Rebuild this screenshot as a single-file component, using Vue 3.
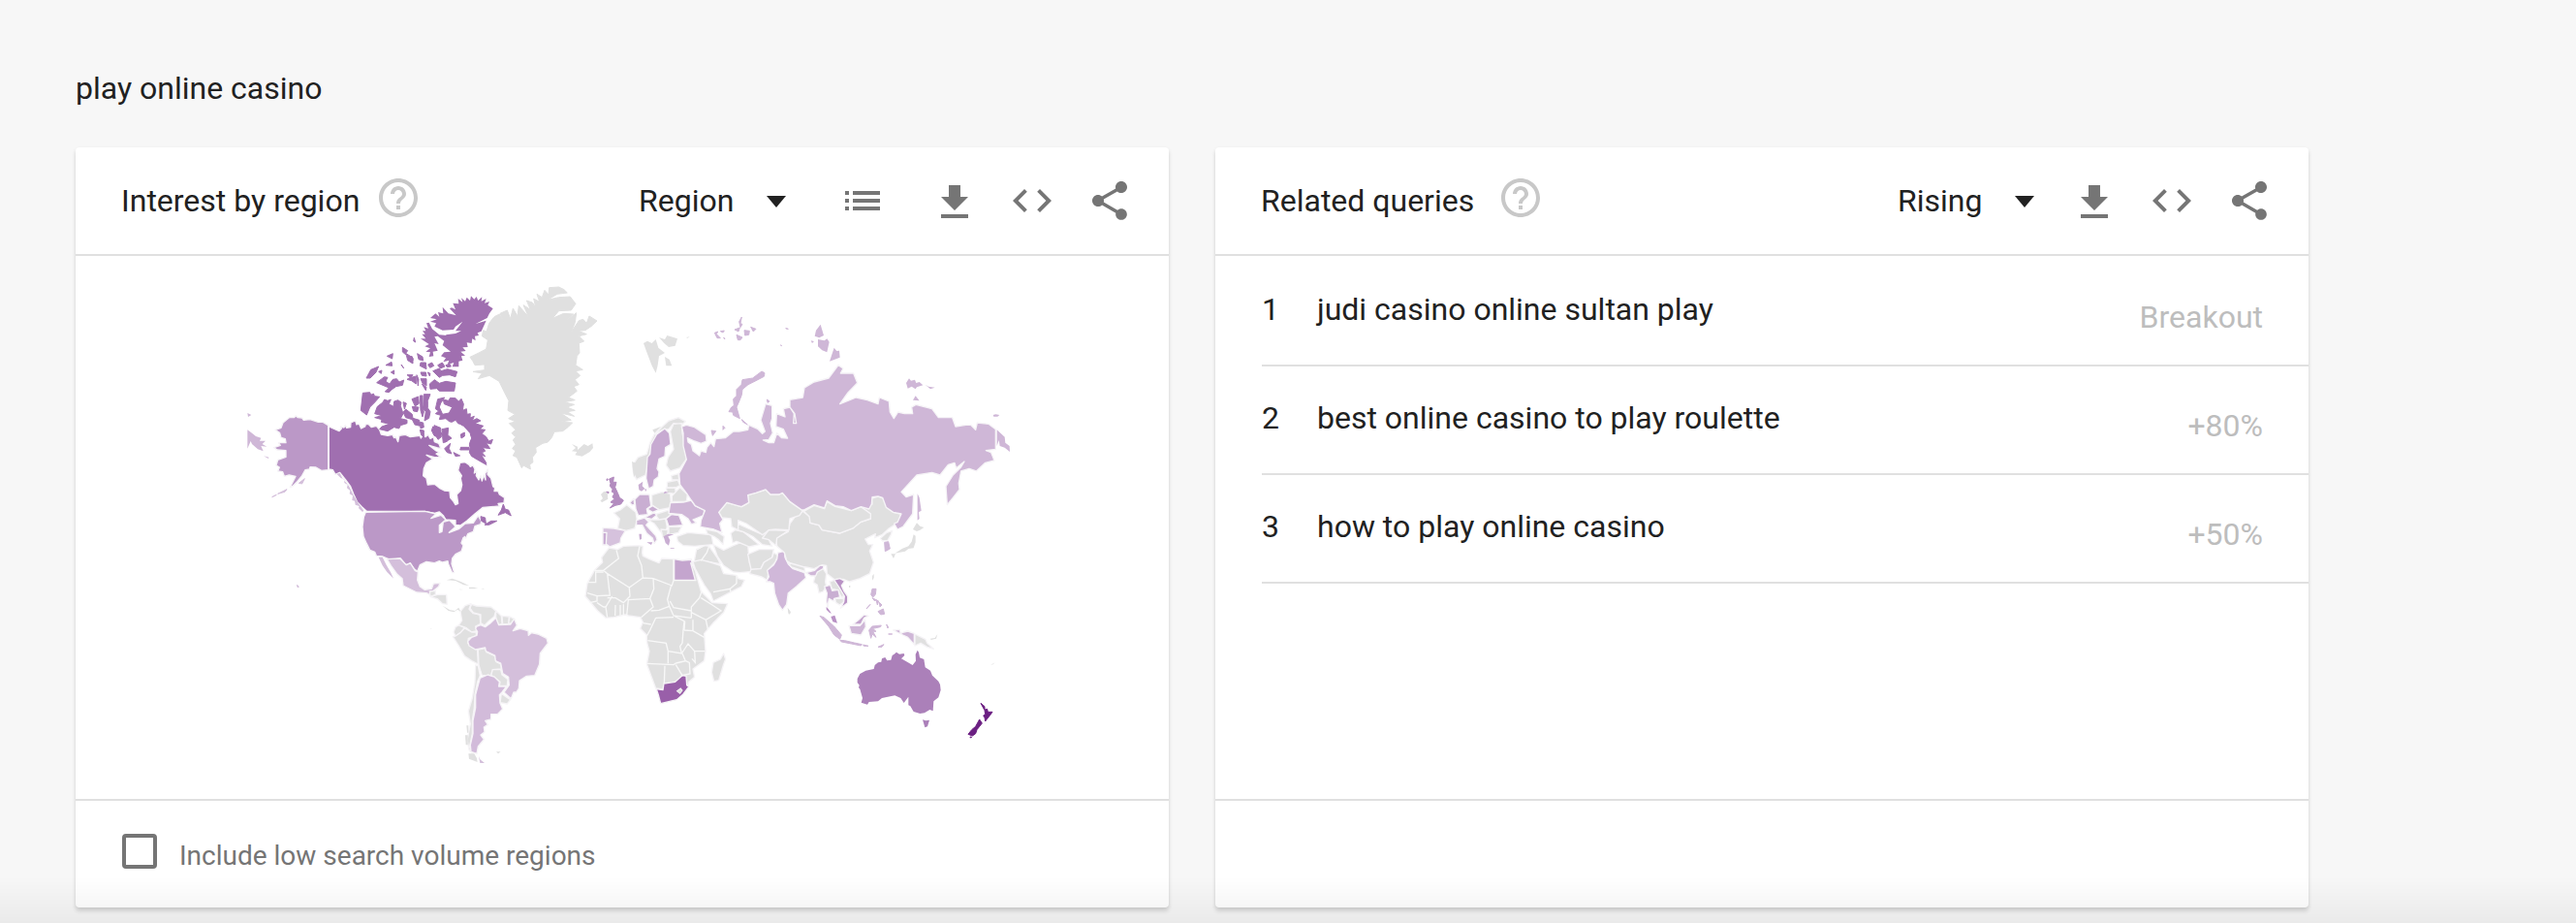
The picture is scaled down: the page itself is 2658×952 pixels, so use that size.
<script setup>
import { ref } from 'vue'

const resolution = ref('Region')
const ranking = ref('Rising')
const includeLowVolume = ref(false)

const queries = [
  { text: 'judi casino online sultan play', value: 'Breakout' },
  { text: 'best online casino to play roulette', value: '+80%' },
  { text: 'how to play online casino', value: '+50%' },
]

const icons = {
  list: 'M3 13h2v-2H3zm0 4h2v-2H3zm0-8h2V7H3zm4 4h14v-2H7zm0 4h14v-2H7zM7 7v2h14V7z',
  download: 'M19 10h-4V4H9v6H5l7 7zM5 19v2h14v-2z',
  code: 'M9.4 16.6L4.8 12l4.6-4.6L8 6l-6 6 6 6zm5.2 0l4.6-4.6-4.6-4.6L16 6l6 6-6 6z',
  share: 'M18 16.08c-.76 0-1.44.3-1.96.77L8.91 12.7c.05-.23.09-.46.09-.7s-.04-.47-.09-.7l7.05-4.11c.54.5 1.25.81 2.04.81 1.66 0 3-1.34 3-3s-1.34-3-3-3-3 1.34-3 3c0 .24.04.47.09.7L8.04 9.81C7.5 9.31 6.79 9 6 9c-1.66 0-3 1.34-3 3s1.34 3 3 3c.79 0 1.5-.31 2.04-.81l7.12 4.16c-.05.21-.08.43-.08.65 0 1.61 1.31 2.92 2.92 2.92s2.92-1.31 2.92-2.92-1.31-2.92-2.92-2.92z',
  help: 'M11 18h2v-2h-2zm1-16C6.48 2 2 6.48 2 12s4.48 10 10 10 10-4.48 10-10S17.52 2 12 2zm0 18c-4.41 0-8-3.59-8-8s3.59-8 8-8 8 3.59 8 8-3.59 8-8 8zm0-14c-2.21 0-4 1.79-4 4h2c0-1.1.9-2 2-2s2 .9 2 2c0 2-3 1.75-3 5h2c0-2.25 3-2.5 3-5 0-2.21-1.79-4-4-4z',
}
const regionActions = [
  { name: 'Download', icon: 'download' },
  { name: 'Embed', icon: 'code' },
  { name: 'Share', icon: 'share' },
]

const none = '#e0e0e0'
const ru = '#cfb7d7'
const ca = '#a06fb0'
const light = '#d4bfdb'

// Each area has its own origin on the map; three drawing units make one map unit.
const areas = [
  {
    name: 'North America', x: 240, y: 280,
    shapes: [
      { fill: ca, d: 'M298 480L330 494 337 486 334 480 345 483 349 476 353 484 365 482 366 468 380 462 384 474 391 471 398 486 410 480 412 473 420 472 430 482 445 478 455 490 460 504 480 508 495 505 500 515 505 512 512 527 516 508 535 505 550 512 580 508 583 516 590 505 597 512 605 505 612 517 622 512 625 527 638 532 645 548 632 545 608 538 630 555 640 560 630 564 645 575 625 575 600 568 620 580 600 592 592 610 590 632 600 640 604 660 625 658 640 670 655 678 672 680 674 700 684 712 690 722 698 718 694 690 706 678 710 660 706 640 709 632 698 615 704 592 720 590 732 598 736 604 744 600 750 612 748 624 756 618 754 632 762 645 768 632 772 648 778 630 783 645 782 625 790 612 789 628 800 640 806 665 812 670 810 680 822 680 826 690 842 700 840 716 822 718 826 726 800 728 775 730 750 750 725 772 705 786 690 784 690 770 660 768 652 755 640 744 625 748 595 742 415 742 400 728 385 712 375 690 365 665 350 645 332 622 318 628 310 614 298 612Z' },
      { fill: '#bb98c7', d: 'M132 490L150 484 156 468 175 452 190 452 196 446 202 452 215 453 220 460 240 458 265 466 280 466 296 476V614L275 616 258 606 240 605 238 612 225 614 215 632 200 650 185 665 178 668 195 634 175 630 160 634 155 620 140 618 145 606 135 600 140 583 165 574 165 554 138 552 128 545 148 538 142 530 165 530 163 518 150 514 146 500Z' },
      { fill: '#bb98c7', d: 'M412 745L595 742 630 750 614 764 645 754 660 768 640 785 640 808 648 805 652 775 672 770 684 782 690 790 670 808 700 797 720 780 745 778 760 756 770 772 768 782 750 788 745 805 728 812 722 826 718 820 712 832 714 824 708 840 714 848 708 866 690 875 680 888 678 905 686 932 680 932 668 905 666 896 650 900 640 896 625 902 600 898 580 908 572 928 562 920 550 904 536 908 520 888 488 892 465 882 445 880 440 868 425 862 415 842 405 820 402 790 406 760Z' },
    ],
    details: [
      { fill: ca, edge: true, d: 'M403 376L425 374 428 382 436 378 440 386 455 388 440 405 425 420 415 444 397 430ZM440 440L448 418 465 405 470 396 480 400 490 396 484 410 498 418 500 402 512 398 522 405 520 416 528 440 520 455 540 460 540 470 520 476 515 486 500 482 480 494 455 488 462 480 485 472 460 466 462 458 440 452 462 446ZM635 395L656 390 644 408 640 420 650 442 670 438 680 420 655 410 652 396 668 400 674 391 690 392 700 402 708 394 715 410 712 430 724 425 726 442 736 440 735 453 748 448 742 462 756 455 768 462 750 470 776 478 765 488 782 490 772 502 785 512 793 525 805 520 800 534 785 530 797 548 775 545 782 556 772 560 782 572 770 568 785 592 785 602 765 590 740 572 733 560 735 545 732 532 740 516 736 504 730 495 715 478 700 472 690 460 675 468 660 455 640 458 644 445 628 440 638 432 628 425Z' },
      { fill: ca, d: 'M582 208L598 208 586 194 596 194 588 184 598 184 592 172 606 176 600 160 608 158 618 178 640 196 665 198 684 218 660 196 690 192 708 184 690 184 712 155 690 170 684 180 650 182 625 170 630 160 612 155 632 148 612 144 628 130 640 140 636 126 652 130 650 110 668 130 692 136 672 115 678 112 690 118 682 98 700 100 698 84 712 95 708 82 720 92 725 80 735 90 738 76 748 86 755 78 760 90 772 79 770 92 785 84 780 98 795 93 790 104 806 115 795 130 788 144 752 162 785 152 770 185 758 190 762 198 750 200 752 214 742 208 740 222 725 220 728 234 712 235 722 246 706 248 720 260 708 262 712 275 700 278 700 295 680 295 685 282 665 288 670 275 652 280 660 268 645 262 655 250 675 248 650 228 655 215 635 200 625 202 638 225 625 222 635 245 620 248 622 262 608 264 612 250 598 248 612 238 595 232 608 225Z' },
      { fill: ca, edge: true, d: 'M610 348L625 335 640 346 660 340 690 345 686 370 640 370 632 362 612 364ZM620 308L640 300 645 308 665 302 695 310 690 326 672 320 650 322 640 328ZM635 290l14-8 8 12-14 6zM582 312l16 0 2 12-14-2zM582 332l18 0 0 22-12-8zM586 348l14 10-2 10zM526 235l16 10-6 8 22 14 0 18-16-10-4-16-12-10zM572 254l16 10 2 12-14-4zM582 282l16 0 2 20-20-10zM478 262l18-8-2 16zM474 290l18-10 2 12zM414 330l14-26 24-10-8 18-18 18zM446 344l24-18 10 2-6 12 12 8 10-14 12-2 8 10 14-6-4 16-20 4-14 10-8 8-12-2 12-12zM540 320l18 0-6 8 16-4 0 24-14-10-14-4 10-6zM562 205l-2 10 6 4zM522 288l8 12zM528 404l10 4-6 18zM555 395l20-8 2 22-12 8zM556 418l20 2-4 14-12-2zM528 436l8-10 20 16 2 12 20 6 2 18-16-4-8-16-20-6zM580 384h8v30l4 20-4 16-6-20zM592 380h20l-8 20 0 22 8 12-4 20-14 8 4-28-8-10zM580 466l10 2 2 14-10 4zM580 490l12 2 0 20-8-6zM620 480l16 10-2 22-10-4-8-16zM642 490l14-6 14 20-8 8 12 10-22 8-2-18zM708 500l12-4 0 14-10 4zM708 544h24v8h-28zM768 758l14 4 2 18-14-8zM780 784l20-12 18 0-24 12zM838 720l6 16 10 2 8 18-18-10-22 8 10-16zM452 310l10-4-2 10zM490 312l10-6 0 12zM570 320l6 14-2 20zM604 312l8 4-2 8zM605 288l12-6 6 10-12 6zM545 268l10-6 4 12zM660 290l12-4 4 8-12 2z' },
      { fill: light, d: 'M322 626l10-2 8 16 20 24 14 28 16 26 16 22-4 4-12-12 2-6-12-4-2-12-8-2 2-14-10-6 2-10-10-8 2-10-10-6 0-10-12-6z' },
      { fill: ru, d: 'M46 490L60 500 72 510 88 515 84 524 102 524 92 534 106 542 88 540 95 556 78 550 60 534 56 525 46 548ZM46 438l12 6-10 6zM96 571l16 4-1 4z' },
      { fill: light, edge: true, d: 'M205 655l18-14-8 16zM144 686l24-12-6 8-22 6zM122 698l14-7zM200 970l5 6-4 1z' },
      { fill: '#ffffff', d: 'M628 464L670 466 705 474 720 486 734 500 736 520 728 545 702 545 690 560 660 568 640 560 655 548 670 540 662 520 650 500 636 490ZM700 572L740 574 786 600 788 612 752 594 700 588Z' },
      { fill: ca, edge: true, d: 'M624 476l20 8 2 28-10 8-12-20zM648 488l20-4-2 22 12 10-20 12-6-18zM706 504l12-6 0 12-10 6zM706 544h22v6h-22zM656 548l18-16-4 16 8 16-14-4zM684 560l20 10-14 2z' },
    ],
  },
  {
    name: 'Greenland', x: 460, y: 280,
    shapes: [],
    details: [
      { fill: none, edge: true, d: 'M75 265L102 252 125 240 130 212 112 200 116 182 126 186 134 160 150 140 166 132 180 158 168 130 190 120 200 146 208 114 222 138 226 106 256 140 240 104 262 118 250 90 268 96 278 110 272 84 290 94 282 70 298 80 306 58 318 72 320 50 350 48 366 56 376 66 345 70 315 88 350 80 385 78 402 100 388 120 350 122 330 145 365 130 395 132 372 154 404 128 400 158 388 188 412 152 425 148 436 160 444 138 468 153 450 170 432 182 410 184 436 194 412 200 428 216 412 222 414 252 406 262 402 290 424 304 402 308 416 322 400 335 412 350 396 356 406 370 380 390 400 398 366 404 398 412 375 420 400 430 376 434 398 448 356 438 388 460 352 466 392 468 378 482 362 494 336 496 328 514 316 528 300 532 278 545 280 560 268 575 270 590 260 598 262 612 240 600 235 608 220 575 208 570 216 555 206 548 216 535 208 522 216 512 204 500 216 490 196 470 216 465 194 455 214 442 192 430 195 400 182 375 165 340 135 322 100 332 112 315 84 310 120 305 120 288 90 290 84 278Z' },
      { fill: none, d: 'M390 534l18 8 0 10 20-18 12 6 14-8 2 14-10 12-24 14-22-4 6-10-16-2 12-10z' },
    ],
  },
  {
    name: 'Latin America', x: 360, y: 530,
    shapes: [
      { fill: light, d: 'M118 140L158 138 178 158 190 152 205 176 214 180 212 205 220 225 235 235 256 232 262 216 282 214 278 225 262 238 250 250 240 245 210 243 168 222 165 200 148 185 130 160Z' },
      { fill: none, d: 'M250 240L268 238 268 250 252 256ZM252 256L275 250 302 250 304 280 290 278 275 264Z' },
      { fill: none, d: 'M345 302L360 284 378 278 372 295 385 308 405 312 408 340 392 348 396 362 380 366 362 352 340 345 350 330Z' },
      { fill: none, d: 'M380 280L395 285 440 288 455 300 450 318 435 330 420 345 408 338 408 312 385 306 375 292Z' },
      { fill: none, d: 'M455 300L472 316 474 340 464 344 455 325ZM474 316L496 318 494 340 476 342ZM498 318L512 325 504 340 494 338Z' },
      { fill: none, d: 'M330 350L340 345 358 352 345 368 330 378 324 366Z' },
      { fill: none, d: 'M322 380L330 378 345 368 358 354 380 366 394 366 394 378 370 385 368 400 380 412 398 420 400 465 380 455 358 440 340 408Z' },
      { fill: none, d: 'M400 420L422 416 426 428 452 440 456 458 470 465 472 480 445 482 440 500 412 500 402 468Z' },
      { fill: none, d: 'M445 482L470 482 474 498 492 512 490 532 466 532 468 520 440 500Z' },
      { fill: none, d: 'M392 468L400 470 406 500 398 520 390 560 388 600 382 640 382 680 374 720 382 740 372 730 366 700 376 650 370 610 382 570 390 520Z' },
      { fill: none, d: 'M472 556L500 575 490 588 468 584Z' },
      { fill: '#d2bbda', d: 'M406 508L430 498 450 504 466 520 464 534 488 534 474 552 466 560 468 586 476 604 460 620 440 620 440 636 422 640 430 652 418 660 420 675 408 684 418 698 400 720 396 742 378 736 376 715 384 680 384 640 392 600 392 560 400 530Z' },
      { fill: light, d: 'M396 348L408 344 422 350 438 338 455 322 464 344 500 342 512 325 520 345 508 362 530 355 555 362 556 376 565 368 585 372 612 385 616 400 592 432 590 465 575 500 550 502 528 516 526 540 518 552 510 552 502 572 480 552 496 530 494 505 476 494 470 462 454 455 452 438 424 425 422 414 392 420 372 408 368 395 380 382 396 376 398 365 392 355Z' },
    ],
    details: [
      { fill: light, d: 'M92 134L104 134 116 158 130 182 138 200 118 180 104 160ZM402 750l4 10 14 11-14 0z' },
      { fill: none, d: 'M290 284L312 297 328 300 340 290 346 302 336 296 325 304 308 300ZM302 205L320 200 345 209 372 222 355 220 330 207ZM372 227h14l14 4-28 1zM342 233l14 1-12 1zM408 232h10v2zM370 742l18 0 8 14 2 12-26-10zM456 736l14 0-8 6zM253 353l4 2-3 1zM364 655h6v22h-4zM360 685h8v30h-6z' },
    ],
  },
  {
    name: 'Africa and Middle East', x: 580, y: 520,
    shapes: [
      { fill: none, d: 'M145 135L172 140 190 130 235 128 250 130 248 150 250 160 270 170 300 182 308 168 345 170 372 174 400 170 404 190 412 205 430 270 440 280 465 305 512 308 500 335 470 365 440 400 444 455 440 485 405 510 410 535 392 550 388 568 370 560 308 572 290 570 262 495 270 455 262 425 262 405 242 385 250 365 242 350 205 345 195 342 160 350 135 352 110 330 85 300 72 285 78 245 100 205 125 180 122 165Z' },
      { fill: none, d: 'M412 160L416 140 440 128 455 130 480 165 490 185 460 180 430 175 408 180Z' },
      { fill: none, d: 'M405 178L430 172 460 180 490 190 500 215 540 220 545 230 565 235 555 255 522 272 468 300 460 278 440 250 412 200Z' },
      { fill: none, d: 'M468 125L478 130 500 142 530 128 550 120 575 125 580 180 590 208 550 212 530 210 500 190 480 160Z' },
      { fill: none, d: 'M575 155L610 140 655 140 650 165 625 180 615 200 585 202 580 180Z' },
      { fill: none, d: 'M585 202L615 200 625 180 650 165 655 150 668 158 660 180 640 200 635 235 618 225 580 215Z' },
      { fill: none, d: 'M522 90L535 80 560 85 610 125 580 132 570 128 540 115 528 120Z' },
      { fill: none, d: 'M543 60L575 75 610 90 640 80 650 95 640 110 650 130 620 125 590 100 560 85 543 80Z' },
      { fill: '#c4a5ce', d: 'M347 170L372 174 400 172 404 190 398 182 412 235H347Z' },
      { fill: '#995fa9', d: 'M292 572L312 575 315 555 350 550 372 530 384 532 386 560 392 565 375 588 355 605 305 617 298 590Z' },
      { fill: '#d0b8d9', d: 'M665 170L668 150 688 145 690 165 700 185 715 200 750 212 755 228 725 255 700 275 695 310 682 328 670 310 658 275 655 245 645 240 632 240 640 225 635 205 655 188Z' },
      { fill: none, d: 'M500 462L506 480 500 495 485 545 470 548 463 520 468 490 490 480Z' },
    ],
    borders: 'M100 205H128L175 168 168 142M78 242H104V210H128M128 205L140 215 148 282 108 284 78 275M140 215L208 258 250 228 246 190 234 160 240 130M250 228L282 230 340 252 345 236V170M345 236H415M208 258L210 285 190 305 165 290 140 290M282 230L284 262 272 292 205 296 200 345M272 292L282 318 262 335 245 350M275 330L300 328 332 316 345 345 400 352M332 316L326 295 338 250M345 345L378 362 375 390 372 430 365 440 370 462 328 455 322 430 265 422M290 352L345 350M290 352L272 390 262 408M262 493L345 497 352 492M328 455V493M370 462L390 432 410 455 442 455M352 492L382 485 372 462M318 500L316 555M352 497L372 530 396 525 394 490 382 485M400 352L400 318 425 290 432 270M400 330L345 320 334 300M400 335L445 358 492 330 465 312 430 290M445 358L452 390M378 390L405 392 440 412M405 358L405 390M380 362L378 390M190 310V345M180 312V345M165 312L164 345M135 318L140 350M108 305L128 318 135 318 155 285M85 305L108 300 108 284M250 368L275 372M410 455L412 490 402 478M430 175L448 150 455 130M440 128L418 140M468 272L520 262 522 272M520 262L540 245 540 222',
    details: [
      { fill: '#f4f4f4', d: 'M353 578l14-10 7 8-9 12z' },
      { fill: none, d: 'M357 579l9-7 5 5-7 7zM698 320l10 14-7 5z' },
    ],
  },
  {
    name: 'East Asia and Oceania', x: 800, y: 520,
    shapes: [
      { fill: none, d: 'M300 0L298 -18 318 -24 332 -20 345 8 365 25 388 30 384 52 368 65 352 75 330 95 308 104 310 92 278 108 288 125 302 125 292 145 304 180 292 215 262 230 230 240 210 232 185 235 160 215 158 190 145 188 120 200 95 195 60 192 35 175 28 150 5 130 2 105 40 85 45 60 60 40 85 22 108 40 108 58 135 65 145 80 200 90 240 75 265 55 295 45 295 30 270 12Z' },
      { fill: none, d: 'M38 180L90 195 92 208 50 195Z' },
      { fill: none, d: 'M125 215L145 195 158 215 155 240 158 255 148 270 135 275 130 250 118 242Z' },
      { fill: none, d: 'M168 240L182 235 196 250 212 280 208 292 190 265 175 262Z' },
      { fill: none, d: 'M185 292h26v12l-12 8-12-8z' },
      { fill: '#c9aed2', d: 'M152 255L170 250 176 268 195 265 200 288 182 292 180 300 166 292 162 320 158 300 160 275Z' },
      { fill: '#b992c5', d: 'M182 234L200 230 215 238 205 252 212 268 224 285 224 305 202 322 212 302 214 285 196 255Z' },
      { fill: ru, d: 'M95 212L122 205 138 190 150 190 148 200 130 210 125 222 110 222ZM228 376L262 376 278 358 280 380 265 405 235 400Z' },
      { fill: '#c4a5ce', d: 'M240 372L258 358 275 342 288 346 275 352 265 372Z' },
      { fill: ru, d: 'M365 390L385 388 388 400 398 396 410 393 430 400V434L410 412 395 405Z' },
      { fill: none, d: 'M432 402L465 418 470 430 490 448 470 442 450 430 432 438Z' },
      { fill: none, d: 'M325 106L345 88 362 82 358 94 348 112 332 114Z' },
    ],
    details: [
      { fill: '#ab80b9', d: 'M254 540L262 525 280 515 305 510 308 498 318 490 328 488 330 478 340 474 346 484 358 482 362 468 368 464 375 458 384 464 398 462 400 468 390 478 425 498 435 485 434 465 440 452 444 458 447 475 460 480 464 505 480 515 486 530 505 548 510 558 512 575 505 598 490 610 488 640 478 636 462 646 448 648 428 642 418 625 412 622 412 596 398 615 388 600 370 592 330 600 318 610 290 612 285 620 266 614 270 600 262 572 258 568 260 560 254 552ZM456 667l10 3 11-2-6 20-8 3z' },
      { fill: '#6b1f82', edge: true, d: 'M636 616L648 626 648 636 656 634 658 643 672 643 664 654 656 664 650 672 648 660 644 654 650 650 648 638ZM632 666L640 678 632 688 624 698 620 710 610 717 597 712 608 698 620 688ZM603 720l5 1-4 2z' },
      { fill: ru, edge: true, d: 'M338 118l12-2 5 22-15 8zM138 346L150 350 182 378 205 405 200 418 182 405 165 378ZM200 421L215 422 245 429 268 434 265 438 235 432 205 426ZM290 390L300 378 328 375 325 380 302 385 312 394 302 394 312 412 300 402 296 415ZM272 435l16 4-14 0zM318 442l18-8-6 8zM300 262h12l-2 18-8 8-6-8zM318 332l16-8 4 16-12 2zM312 296l8 4-4 12zM322 304l8 8-6 6zM282 324l12-14zM344 372l6 8-2 4zM350 402h12zM300 290l12 6-4 4z' },
      { fill: '#b992c5', d: 'M172 348L184 344 192 368 178 364ZM158 318l6 6 10 14-6-2-10-10z' },
      { fill: none, d: 'M438 58L448 68 460 72 448 80 438 84 426 78ZM428 94L434 98 434 118 428 136 412 138 402 146 370 152 392 138 412 130 422 116ZM358 154l14 0-6 14zM300 222l5-6 0 12-5 8zM480 416l14-2 8-12-4 14-16 4zM228 252h4v6h-4zM38 322l10 14-6 6zM515 418l10 6zM548 435l10 4zM595 478l5 5zM666 498l14-8-6 6zM588 518l5 6z' },
    ],
  },
  {
    name: 'Europe and North Asia', x: 580, y: 280,
    shapes: [
      { fill: none, d: 'M218 600L235 575 262 565 272 530 285 505 310 480 330 462 360 452 382 464 370 475 345 470 330 488 312 490 292 500 285 530 272 560 265 600 258 630 230 644 220 620Z' },
      { fill: none, d: 'M335 495L345 472 370 470 372 500 380 540 385 580 365 608 335 618 322 600 328 575 345 550Z' },
      { fill: none, d: 'M338 632L360 626 362 645 340 645ZM325 652L358 645 365 662 350 670 325 668ZM322 670L350 668 352 688 325 685Z' },
      { fill: none, d: 'M160 747L180 738 200 722 228 745 232 770 225 795 198 802 172 795 178 765Z' },
      { fill: none, d: 'M278 692L310 682 335 688 338 730 300 738 278 722Z' },
      { fill: none, d: 'M340 695L365 668 388 690 385 712 340 712Z' },
      { fill: none, d: 'M288 752L330 738 335 755 320 765 300 768ZM266 768L300 768 320 765 325 790 318 818 300 800 285 780Z' },
      { fill: none, d: 'M330 790L370 790 360 808 330 815ZM306 798L328 800 325 820 312 825Z' },
      { fill: none, d: 'M355 820L390 808 430 812 462 815 468 845 410 850 375 848 358 835Z' },
      { fill: none, d: 'M445 798L480 805 502 820 498 845 484 830 470 820 450 812Z' },
      { fill: none, d: 'M485 745L510 715 555 728 578 715 575 692 630 675 645 690 672 690 682 685 705 712 745 740 735 755 705 765 702 800 660 798 640 800 620 815 570 780 545 770 545 800 525 790 522 765 495 762Z' },
      { fill: none, d: 'M640 800L700 802 665 825 662 848 640 830 620 825Z' },
      { fill: none, d: 'M748 742L780 724 812 734 820 712 845 727 895 740 925 728 955 750 955 765 925 775 900 795 860 810 805 800 795 785 768 778 765 758Z' },
      { fill: '#c7aad1', d: 'M318 486L332 500 336 535 320 545 318 572 300 580 294 610 300 620 298 635 285 645 282 665 268 672 260 640 264 575 272 565 275 535 292 505Z' },
      { fill: '#d6c2dd', d: 'M126 793L160 795 196 802 182 825 180 840 148 852 138 845 126 845Z' },
      { fill: '#c9add3', d: 'M126 808L138 808 136 846 126 846Z' },
      { fill: '#c9aed2', d: 'M225 705L240 690 270 690 275 725 262 735 265 752 236 755 228 735ZM210 715l12-12 2 18-8 2zM264 735l16-10 20 12-20 8zM255 762l30-16 8 8-15 12zM322 765L338 752 362 755 374 785 330 788Z' },
      { fill: ru, d: 'M230 770L255 762 268 775 260 785 290 818 294 830 285 842 280 825 262 810 248 785 230 784ZM335 716L375 714 400 708 412 725 440 738 438 755 405 768 415 778 400 782 390 765 370 752 330 748Z' },
      { fill: ru, d: 'M370 480L385 475 410 482 445 505 447 525 430 532 410 525 388 515 390 528 400 535 405 555 425 570 430 555 445 560 448 545 460 530 470 542 475 518 505 515 530 495 548 495 575 490 578 475 605 487 620 502 628 495 615 460 630 410 650 415 650 455 645 470 652 500 640 520 622 522 640 530 655 530 665 500 680 515 698 516 685 488 662 480 664 440 690 450 685 425 705 420 720 440 725 470 716 470 718 440 705 420 705 397 745 390 750 360 780 342 825 330 840 310 855 290 870 300 862 315 902 315 914 345 885 375 860 410 890 398 910 390 945 398 978 410 982 390 1012 402 1015 435 1027 455 1040 435 1060 440 1085 440 1082 420 1095 412 1145 425 1165 452 1208 452 1218 480 1250 475 1265 475 1280 490 1285 468 1320 472 1342 488V550L1312 554 1328 560 1338 585 1310 592 1282 618 1260 610 1235 618 1228 655 1230 675 1210 700 1192 722 1188 665 1210 630 1235 605 1245 588 1220 608 1215 592 1195 598 1170 630 1145 622 1098 630 1050 682 1065 698 1088 690 1085 750 1055 790 1038 798 1028 780 1038 776 1050 750 1025 745 1003 730 992 700 978 696 960 698 958 720 950 735 925 728 895 740 870 728 845 725 820 710 812 732 780 722 748 738 742 738 705 712 682 685 672 690 645 690 630 675 600 685 575 692 578 715 555 728 510 715 485 745 498 768 488 780 495 808 470 798 428 790 430 770 442 740 412 725 400 708 388 690 365 660 362 625 385 582 375 540 375 500Z' },
    ],
    details: [
      { fill: '#b38cbf', edge: true, d: 'M146 642L160 636 158 652 168 652 164 668 172 685 178 700 190 708 182 720 165 724 148 732 160 718 150 714 162 704 156 698 162 686 154 682 156 674 148 664 150 656ZM136 682h8l0 4-8 0zM138 642l4 0-3 6z' },
      { fill: none, d: 'M120 690L130 680 140 684 142 704 124 714 118 710 126 702ZM252 222L264 215 278 222 290 210 298 236 318 252 300 262 296 290 290 314 278 292 262 250ZM300 204L318 210 325 198 345 204 357 208 350 230 330 234 316 222ZM318 264l14 8 8 20-18 0zM384 204l12-2-8 4zM238 598l-22-10 6 50zM280 490l26-10-20 20zM365 250h6z' },
      { fill: '#c9aed2', d: 'M236 660L250 650 248 664 256 672 246 680 238 676ZM256 672l6 2-4 8zM314 820L328 812 346 814 328 820 334 832 330 848 320 840ZM262 838h18l-4 8zM238 812h8v16l-6 2zM318 680l12 4-16 4zM335 856h12v2h-12z' },
      { fill: ru, edge: true, d: 'M618 309L627 314 625 325 600 338 576 350 558 365 556 382 548 402 540 420 550 455 530 445 528 435 516 434 524 420 532 415 530 395 540 385 540 365 555 350 558 335 590 330ZM472 190l10-4-4 8 12 12-10 0zM490 185l12-2-4 6zM534 180l16-6-4 12zM548 155l8-14-4 20 6 2-6 10zM564 182l16 2-2 12-12 2zM584 172l16 6-8 8zM540 196l18 8-6 8-8 0zM500 204l4 6zM634 396l8 6-6 4zM556 458l18 16-14-8zM498 478l6 6-6 6zM462 492l14 2-10 14zM692 176l8 2zM676 228l4 2z' },
      { fill: ru, d: 'M800 164L810 198 796 205 782 200 786 182ZM792 210L812 214 820 208 827 218 820 250 805 244 792 232ZM842 236L850 246 858 245 860 266 828 278ZM770 214l10 2-6 6zM765 166l4 2zM1065 345L1074 331 1080 338 1092 335 1096 345 1106 342 1117 352 1098 358 1094 364 1082 356 1070 362ZM1124 350L1134 356 1154 359 1140 364ZM1094 385L1106 400 1086 398ZM1334 444l8-2 12 2-6 5-12 0zM1346 490L1370 512 1372 530 1385 540 1386 558 1370 545 1355 540 1352 522 1346 540ZM1100 688L1106 700 1112 740 1104 745 1106 765 1100 770ZM797 303l3 4z' },
    ],
  },
]
</script>

<template>
  <main class="page">
    <h1 class="page-title">play online casino</h1>
    <div class="cards">
      <section class="card">
        <header class="card-header">
          <h2>Interest by region</h2>
          <button class="icon-button help" type="button" aria-label="About interest by region">
            <svg viewBox="0 0 24 24"><path :d="icons.help" /></svg>
          </button>
          <div class="tools">
            <div class="picker spaced">
              <select v-model="resolution" aria-label="Resolution">
                <option>Region</option>
                <option>City</option>
              </select>
              <svg class="arrow" viewBox="0 0 20 12"><path d="M0 0h20L10 12z" /></svg>
            </div>
            <button class="icon-button list" type="button" aria-label="Show as list">
              <svg viewBox="0 0 24 24"><path :d="icons.list" /></svg>
            </button>
            <button v-for="a in regionActions" :key="a.name" class="icon-button" type="button" :aria-label="a.name">
              <svg viewBox="0 0 24 24"><path :d="icons[a.icon]" /></svg>
            </button>
          </div>
        </header>
        <div class="card-body">
          <svg class="map" viewBox="78 264 1128 560" role="img" aria-label="World map of interest by region">
            <g v-for="area in areas" :key="area.name" :transform="`translate(${area.x} ${area.y}) scale(0.33333)`">
              <path v-for="(s, i) in area.shapes" :key="i" class="country" :fill="s.fill" :d="s.d" />
              <path v-if="area.borders" class="borders" :d="area.borders" />
              <path
                v-for="(s, i) in area.details"
                :key="`d${i}`"
                :fill="s.fill"
                :stroke="s.edge ? s.fill : 'none'"
                stroke-width="3"
                :d="s.d"
              />
            </g>
          </svg>
        </div>
        <footer class="card-footer">
          <label class="check">
            <input v-model="includeLowVolume" type="checkbox" />
            <span>Include low search volume regions</span>
          </label>
        </footer>
      </section>

      <section class="card">
        <header class="card-header">
          <h2>Related queries</h2>
          <button class="icon-button help wide" type="button" aria-label="About related queries">
            <svg viewBox="0 0 24 24"><path :d="icons.help" /></svg>
          </button>
          <div class="tools">
            <div class="picker">
              <select v-model="ranking" aria-label="Ranking">
                <option>Rising</option>
                <option>Top</option>
              </select>
              <svg class="arrow" viewBox="0 0 20 12"><path d="M0 0h20L10 12z" /></svg>
            </div>
            <button v-for="a in regionActions" :key="a.name" class="icon-button" type="button" :aria-label="a.name">
              <svg viewBox="0 0 24 24"><path :d="icons[a.icon]" /></svg>
            </button>
          </div>
        </header>
        <ol class="queries card-body">
          <li v-for="(q, i) in queries" :key="q.text">
            <span class="rank">{{ i + 1 }}</span>
            <a href="#">{{ q.text }}</a>
            <span class="value">{{ q.value }}</span>
          </li>
        </ol>
        <footer class="card-footer"></footer>
      </section>
    </div>
  </main>
</template>

<style>
body {
  margin: 0;
  background: #f7f7f7;
}
</style>

<style scoped>
.page {
  box-sizing: border-box;
  min-height: 100vh;
  padding: 71px 78px 16px;
  background: #f7f7f7;
  color: #212121;
  font: 32px/40px Roboto, "Liberation Sans", sans-serif;
}
.page::after {
  content: "";
  position: fixed;
  inset: auto 0 0;
  height: 48px;
  background: linear-gradient(rgba(0, 0, 0, 0), rgba(0, 0, 0, 0.05));
  pointer-events: none;
}
h1,
h2 {
  margin: 0;
  font: inherit;
}
.page-title {
  margin-bottom: 41px;
}
.cards {
  display: grid;
  grid-template-columns: repeat(2, minmax(0, 1fr));
  gap: 48px;
  max-width: 2304px;
}
.card {
  display: flex;
  flex-direction: column;
  background: #fff;
  border-radius: 4px;
  box-shadow: 0 4px 4px rgba(0, 0, 0, 0.12), 0 1px 4px rgba(0, 0, 0, 0.06);
}
.card-header {
  display: flex;
  align-items: center;
  height: 110px;
  padding: 0 37px 0 47px;
  border-bottom: 2px solid #e0e0e0;
}
.tools {
  display: flex;
  align-items: center;
  gap: 32px;
  margin-left: auto;
}
.icon-button {
  display: block;
  width: 48px;
  height: 48px;
  padding: 0;
  border: 0;
  background: none;
  cursor: pointer;
}
.icon-button svg {
  display: block;
  width: 48px;
  height: 48px;
  fill: #757575;
}
.help {
  margin: 0 0 6px 16px;
}
.help.wide {
  margin-left: 24px;
}
.help svg {
  fill: #c8c8c8;
}
.list {
  margin-right: 15px;
}
.picker {
  position: relative;
  margin-right: 6px;
}
.picker.spaced {
  margin-right: 23px;
}
.picker select {
  display: block;
  padding: 0 53px 0 0;
  border: 0;
  background: none;
  appearance: none;
  color: inherit;
  font: inherit;
}
.arrow {
  position: absolute;
  top: 15px;
  right: 0;
  width: 20px;
  height: 12px;
  fill: #212121;
  pointer-events: none;
}
.card-body {
  flex: 1;
}
.map {
  display: block;
  width: 100%;
}
.country {
  stroke: #f6f4f7;
  stroke-width: 4;
  stroke-linejoin: round;
}
.borders {
  fill: none;
  stroke: #f8f8f8;
  stroke-width: 4;
}
.card-footer {
  box-sizing: border-box;
  height: 112px;
  padding: 34px 48px 0;
  border-top: 2px solid #e0e0e0;
}
.check {
  display: flex;
  gap: 23px;
  color: #757575;
  font-size: 28px;
  line-height: 45px;
}
.check input {
  box-sizing: border-box;
  width: 36px;
  height: 36px;
  margin: 0;
  border: 4px solid #757575;
  border-radius: 4px;
  appearance: none;
}
.check input:checked {
  background: #757575;
}
.queries {
  margin: 0;
  padding: 2px 0 0 48px;
  list-style: none;
}
.queries li {
  display: flex;
  box-sizing: border-box;
  height: 112px;
  padding: 33px 47px 0 0;
  border-bottom: 2px solid #e0e0e0;
}
.rank {
  width: 57px;
}
.queries a {
  color: inherit;
  text-decoration: none;
}
.value {
  margin: 8px 0 0 auto;
  color: #bdbdbd;
}
</style>
